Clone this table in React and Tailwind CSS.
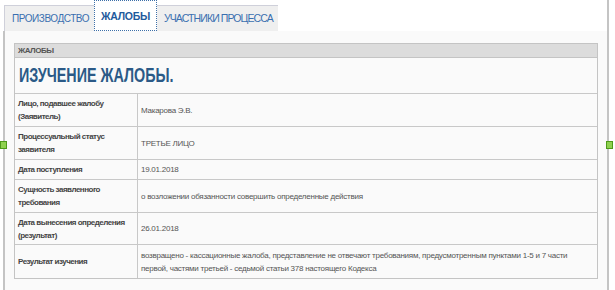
const rows = [
  { label: ['Лицо, подавшее жалобу', '(Заявитель)'], value: 'Макарова Э.В.', h: 'h-[33px]' },
  { label: ['Процессуальный статус', 'заявителя'], value: 'ТРЕТЬЕ ЛИЦО', h: 'h-[33px]' },
  { label: ['Дата поступления'], value: '19.01.2018', h: 'h-[20px]' },
  { label: ['Сущность заявленного', 'требования'], value: 'о возложении обязанности совершить определенные действия', h: 'h-[33px]' },
  { label: ['Дата вынесения определения', '(результат)'], value: '26.01.2018', h: 'h-[32px]' },
  {
    label: ['Результат изучения'],
    value: 'возвращено - кассационные жалоба, представление не отвечают требованиям, предусмотренным пунктами 1-5 и 7 части первой, частями третьей - седьмой статьи 378 настоящего Кодекса',
    h: 'h-[34px]'
  },
];

function Tabs() {
  return (
    <div className="flex items-end h-[31px] pl-[4px] whitespace-nowrap">
      <div className="shrink-0 h-[26px] w-[90px] bg-[#efefef] border-t border-l border-[#cfd0da] flex items-center pl-[7px] text-[10px] tracking-[-0.45px] text-[#3a6fb0] overflow-hidden">
        ПРОИЗВОДСТВО
      </div>
      <div className="shrink-0 h-[31px] w-[63px] bg-white border border-dotted border-[#3d6fa8] flex items-center justify-center pt-[2px] text-[10.5px] font-bold tracking-[-0.3px] text-[#1f5a9c]">
        ЖАЛОБЫ
      </div>
      <div className="shrink-0 h-[26px] w-[121px] bg-[#efefef] border-t border-[#cfd0da] flex items-center pl-[7px] text-[10.5px] tracking-[-0.9px] text-[#3a6fb0]">
        УЧАСТНИКИ ПРОЦЕССА
      </div>
    </div>
  );
}

export default function App() {
  return (
    <div className="relative w-[615px] h-[290px] bg-white overflow-hidden font-['Liberation_Sans',Arial,sans-serif]">
      <div className="w-[609px] h-[290px] flex flex-col border-r-2 border-[#c4c4c4]">
        <Tabs />
        <div className="flex-1 ml-[3px] bg-[#fafafa] border-l-2 border-[#c4c4c4] pt-[12px] pl-[9px] pr-[9px]">
          <div className="border border-[#c4c4c4]">
            <div className="h-[14px] bg-[#dcdcdc] border-b border-[#c4c4c4] flex items-center pl-[3px] text-[8px] font-bold tracking-[-0.5px] text-[#555]">
              ЖАЛОБЫ
            </div>
            <div className="h-[35px] flex items-center pl-[4px]">
              <span className="inline-block origin-left scale-x-[0.735] text-[19.5px] font-bold text-[#2b5a87] whitespace-nowrap">
                ИЗУЧЕНИЕ ЖАЛОБЫ.
              </span>
            </div>
            {rows.map((r, i) => (
              <div key={i} className={`grid grid-cols-[123px_1fr] border-t border-[#c8c8c8] ${r.h}`}>
                <div className="flex flex-col justify-center pl-[3px] border-r border-[#c8c8c8] text-[8px] leading-[13px] font-bold tracking-[-0.5px] text-[#444]">
                  {r.label.map(l => <span key={l}>{l}</span>)}
                </div>
                <div className="flex items-center pl-[3px] pr-[8px] text-[8px] leading-[13px] tracking-[-0.25px] text-[#555]">
                  {r.value}
                </div>
              </div>
            ))}
          </div>
        </div>
      </div>
      <div className="absolute left-0 top-[141px] w-[7px] h-[8px] bg-[#8fd14f] border border-[#4f9a1a]" />
      <div className="absolute left-[606px] top-[141px] w-[7px] h-[8px] bg-[#8fd14f] border border-[#4f9a1a]" />
    </div>
  );
}
